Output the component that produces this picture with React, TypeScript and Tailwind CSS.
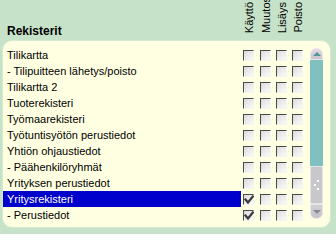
import React from "react";

const rows: { label: string; checked: boolean[]; selected?: boolean }[] = [
  { label: "Tilikartta", checked: [false, false, false, false] },
  { label: "- Tilipuitteen lähetys/poisto", checked: [false, false, false, false] },
  { label: "Tilikartta 2", checked: [false, false, false, false] },
  { label: "Tuoterekisteri", checked: [false, false, false, false] },
  { label: "Työmaarekisteri", checked: [false, false, false, false] },
  { label: "Työtuntisyötön perustiedot", checked: [false, false, false, false] },
  { label: "Yhtiön ohjaustiedot", checked: [false, false, false, false] },
  { label: "- Päähenkilöryhmät", checked: [false, false, false, false] },
  { label: "Yrityksen perustiedot", checked: [false, false, false, false] },
  { label: "Yritysrekisteri", checked: [true, false, false, false], selected: true },
  { label: "- Perustiedot", checked: [true, false, false, false] },
];

const headers = ["Käyttö", "Muutos", "Lisäys", "Poisto"];
const boxMargins = ["ml-[2px]", "ml-[6px]", "ml-[5px]", "ml-[5px]"];

function Box({ checked }: { checked: boolean }) {
  return (
    <div className="relative w-[11px] h-[11px] border-t border-l border-[#4a4a4a] border-r border-b border-r-[#f4f4f4] border-b-[#f4f4f4] bg-gradient-to-br from-[#dcdcdc] to-[#fafafa]">
      {checked && (
        <svg className="absolute left-[0px] top-[0px]" width="10" height="10" viewBox="0 0 10 10">
          <path d="M1.5 4.5 L4 7.5 L8.8 1.5" fill="none" stroke="#3a3a3a" strokeWidth="2.2" strokeLinecap="square" />
        </svg>
      )}
    </div>
  );
}

export default function App() {
  return (
    <div
      className="w-[336px] h-[234px] bg-[#c6e2c8] overflow-hidden flex flex-col text-black"
      style={{ fontFamily: '"Liberation Sans", Arial, sans-serif' }}
    >
      <div className="h-[40px] flex items-end shrink-0">
        <div className="w-[242px] pl-[7px] pb-[2px] text-[12px] font-bold leading-[14px]">Rekisterit</div>
        <div className="flex items-end mb-[7px]">
          {headers.map((h, i) => (
            <div
              key={h}
              className={`${i === 0 ? "ml-[2px]" : i === 1 ? "ml-[6px]" : "ml-[5px]"} w-[11px] text-[11px] leading-[11px] whitespace-nowrap [writing-mode:vertical-rl] rotate-180`}
            >
              {h}
            </div>
          ))}
        </div>
      </div>
      <div className="ml-[2px] w-[329px] h-[188px] rounded-[10px] bg-[#ffffe1] border border-[#d6ead0] flex pt-[6px]">
        <div className="flex flex-col w-[300px]">
          {rows.map((r) => (
            <div key={r.label} className="flex items-center h-[16px]">
              <div
                className={`w-[238px] h-[16px] pl-[4px] text-[11px] leading-[16px] whitespace-nowrap ${
                  r.selected ? "bg-[#0000cc] text-white" : ""
                }`}
              >
                {r.label}
              </div>
              {r.checked.map((c, i) => (
                <div key={i} className={boxMargins[i]}>
                  <Box checked={c} />
                </div>
              ))}
            </div>
          ))}
        </div>
        <div className="ml-[7px] mt-[1px] w-[13px] h-[171px] flex flex-col">
          <div className="h-[12px] rounded-t-[6px] bg-gradient-to-b from-[#e6dce6] to-[#c8c4c8] border border-[#e8e8e8] flex items-center justify-center">
            <div className="w-0 h-0 border-l-[4px] border-r-[4px] border-b-[4px] border-l-transparent border-r-transparent border-b-[#4f9898]" />
          </div>
          <div className="h-[106px] bg-[#80c0c0]" />
          <div className="h-[38px] bg-[#c8c8cc] border border-[#e4e4e8] rounded-[2px] flex flex-col items-center justify-center gap-[2px]">
            <div className="w-[2px] h-[2px] bg-white ml-[3px]" />
            <div className="w-[2px] h-[2px] bg-white mr-[3px]" />
            <div className="w-[2px] h-[2px] bg-white ml-[3px]" />
          </div>
          <div className="h-[15px] rounded-b-[6px] bg-gradient-to-b from-[#d0d0d4] to-[#c4c4c8] border border-[#e8e8e8] flex items-center justify-center">
            <div className="w-0 h-0 border-l-[4px] border-r-[4px] border-t-[4px] border-l-transparent border-r-transparent border-t-[#8a8a94]" />
          </div>
        </div>
      </div>
    </div>
  );
}
